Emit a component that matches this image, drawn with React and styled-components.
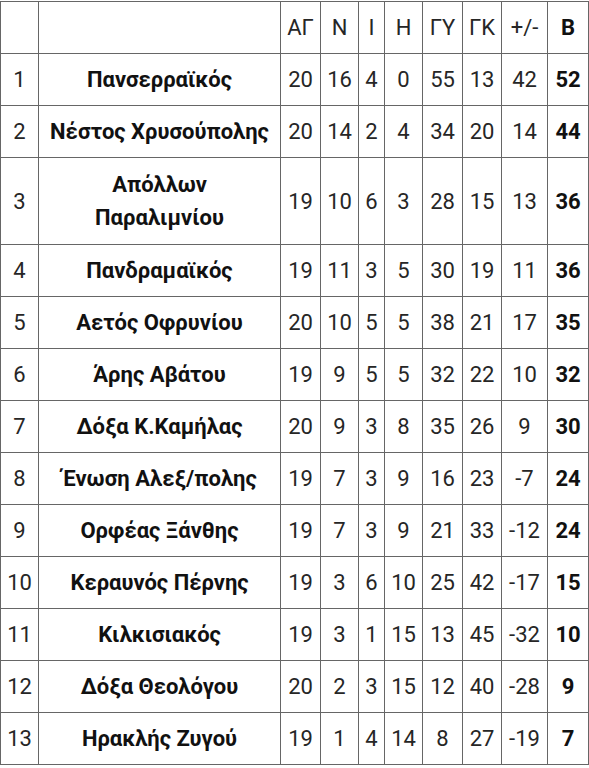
import React from "react";
import styled, { createGlobalStyle } from "styled-components";

const Global = createGlobalStyle`
  html, body { margin: 0; padding: 0; background: #fff; }
  body { font-family: Roboto, "Noto Sans", sans-serif; }
`;

const Table = styled.table`
  border-collapse: collapse;
  table-layout: fixed;
  width: 588px;
  margin-top: 1px;
  font-family: Roboto, "Noto Sans", sans-serif;
  font-size: 22px;
  color: #262626;
`;

const Cell = styled.td`
  border: 1px solid #666;
  padding: ${(p) => (p.$multi ? "10px 0" : "9px 0")};
  line-height: 33px;
  text-align: center;
  font-weight: ${(p) => (p.$bold ? 700 : 400)};
  color: ${(p) => (p.$bold ? "#111" : "#262626")};
  white-space: nowrap;
`;

const HeadCell = styled.th`
  border: 1px solid #666;
  padding: 9px 0;
  line-height: 33px;
  text-align: center;
  font-weight: ${(p) => (p.$bold ? 700 : 400)};
  color: ${(p) => (p.$bold ? "#111" : "#262626")};
`;

const widths = [38, 242, 40, 38, 26, 38, 40, 39, 46, 41];
const headers = ["", "", "ΑΓ", "Ν", "Ι", "Η", "ΓΥ", "ΓΚ", "+/-", "Β"];

const rows = [
  [1, ["Πανσερραϊκός"], 20, 16, 4, 0, 55, 13, 42, 52],
  [2, ["Νέστος Χρυσούπολης"], 20, 14, 2, 4, 34, 20, 14, 44],
  [3, ["Απόλλων", "Παραλιμνίου"], 19, 10, 6, 3, 28, 15, 13, 36],
  [4, ["Πανδραμαϊκός"], 19, 11, 3, 5, 30, 19, 11, 36],
  [5, ["Αετός Οφρυνίου"], 20, 10, 5, 5, 38, 21, 17, 35],
  [6, ["Άρης Αβάτου"], 19, 9, 5, 5, 32, 22, 10, 32],
  [7, ["Δόξα Κ.Καμήλας"], 20, 9, 3, 8, 35, 26, 9, 30],
  [8, ["Ένωση Αλεξ/πολης"], 19, 7, 3, 9, 16, 23, -7, 24],
  [9, ["Ορφέας Ξάνθης"], 19, 7, 3, 9, 21, 33, -12, 24],
  [10, ["Κεραυνός Πέρνης"], 19, 3, 6, 10, 25, 42, -17, 15],
  [11, ["Κιλκισιακός"], 19, 3, 1, 15, 13, 45, -32, 10],
  [12, ["Δόξα Θεολόγου"], 20, 2, 3, 15, 12, 40, -28, 9],
  [13, ["Ηρακλής Ζυγού"], 19, 1, 4, 14, 8, 27, -19, 7],
];

export default function App() {
  return (
    <>
      <Global />
      <Table>
        <colgroup>
          {widths.map((w, i) => (
            <col key={i} style={{ width: w }} />
          ))}
        </colgroup>
        <thead>
          <tr>
            {headers.map((h, i) => (
              <HeadCell key={i} $bold={i === 9}>
                {h}
              </HeadCell>
            ))}
          </tr>
        </thead>
        <tbody>
          {rows.map((r) => (
            <tr key={r[0]}>
              <Cell>{r[0]}</Cell>
              <Cell $bold $multi={r[1].length > 1}>
                {r[1].map((line, j) => (
                  <React.Fragment key={j}>
                    {j > 0 && <br />}
                    {line}
                  </React.Fragment>
                ))}
              </Cell>
              {r.slice(2).map((v, j) => (
                <Cell key={j} $bold={j === 7}>
                  {v}
                </Cell>
              ))}
            </tr>
          ))}
        </tbody>
      </Table>
    </>
  );
}
